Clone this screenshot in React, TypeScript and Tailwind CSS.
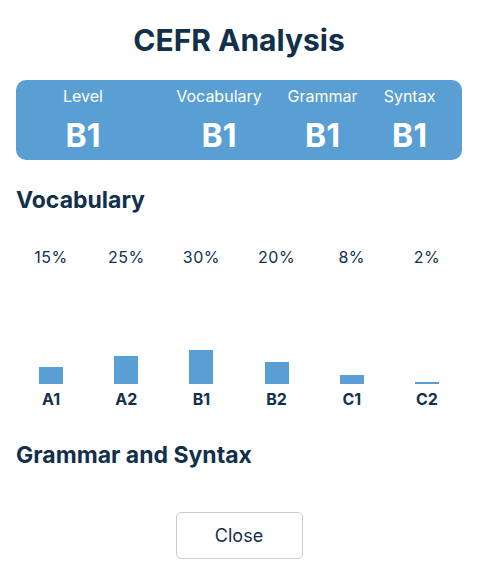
import React from "react";

const levels = [
  { label: "Level", w: "w-[134px]", ml: "" },
  { label: "Vocabulary", w: "w-[84px]", ml: "ml-[27px]" },
  { label: "Grammar", w: "w-[69px]", ml: "ml-[27px]" },
  { label: "Syntax", w: "w-[51px]", ml: "ml-[27px]" },
];

const dist = [
  { lvl: "A1", pct: 15 },
  { lvl: "A2", pct: 25 },
  { lvl: "B1", pct: 30 },
  { lvl: "B2", pct: 20 },
  { lvl: "C1", pct: 8 },
  { lvl: "C2", pct: 2 },
];

export default function App() {
  return (
    <div
      className="w-[478px] h-[576px] bg-white px-4 text-[#12304a] overflow-hidden"
      style={{ fontFamily: "Inter, 'Noto Sans', sans-serif" }}
    >
      <h1 className="pt-5 text-center text-[30px] leading-[40px] font-bold">CEFR Analysis</h1>

      <div className="mt-5 h-[80px] rounded-[10px] bg-[#5a9fd3] text-white flex pr-[27px]">
        {levels.map((l) => (
          <div key={l.label} className={`${l.w} ${l.ml} shrink-0 flex flex-col items-center`}>
            <div className="mt-1 text-[16px] leading-[24px] whitespace-nowrap">{l.label}</div>
            <div className="mt-[8px] text-[32px] leading-[40px] font-bold">B1</div>
          </div>
        ))}
      </div>

      <h2 className="mt-[26px] text-[23px] leading-[28px] font-bold">Vocabulary</h2>

      <div className="mt-[31px] ml-[-2.5px] w-[451px] grid grid-cols-6">
        {dist.map((d) => (
          <div key={d.lvl} className="flex flex-col items-center">
            <div className="text-[16px] leading-[24px] tracking-[0.5px]">{d.pct}%</div>
            <div className="h-[115px] flex items-end">
              <div className="w-[24px] bg-[#5a9fd3]" style={{ height: `${d.pct * 1.12}px` }} />
            </div>
            <div className="mt-[3px] text-[16px] leading-[24px] font-bold">{d.lvl}</div>
          </div>
        ))}
      </div>

      <h2 className="mt-[30px] text-[23px] leading-[28px] font-bold">Grammar and Syntax</h2>

      <div className="mt-[43px] flex justify-center">
        <button className="w-[127px] h-[47px] rounded-[5px] border border-[#cccccc] bg-white text-[18px] text-[#12304a]">
          Close
        </button>
      </div>
    </div>
  );
}
